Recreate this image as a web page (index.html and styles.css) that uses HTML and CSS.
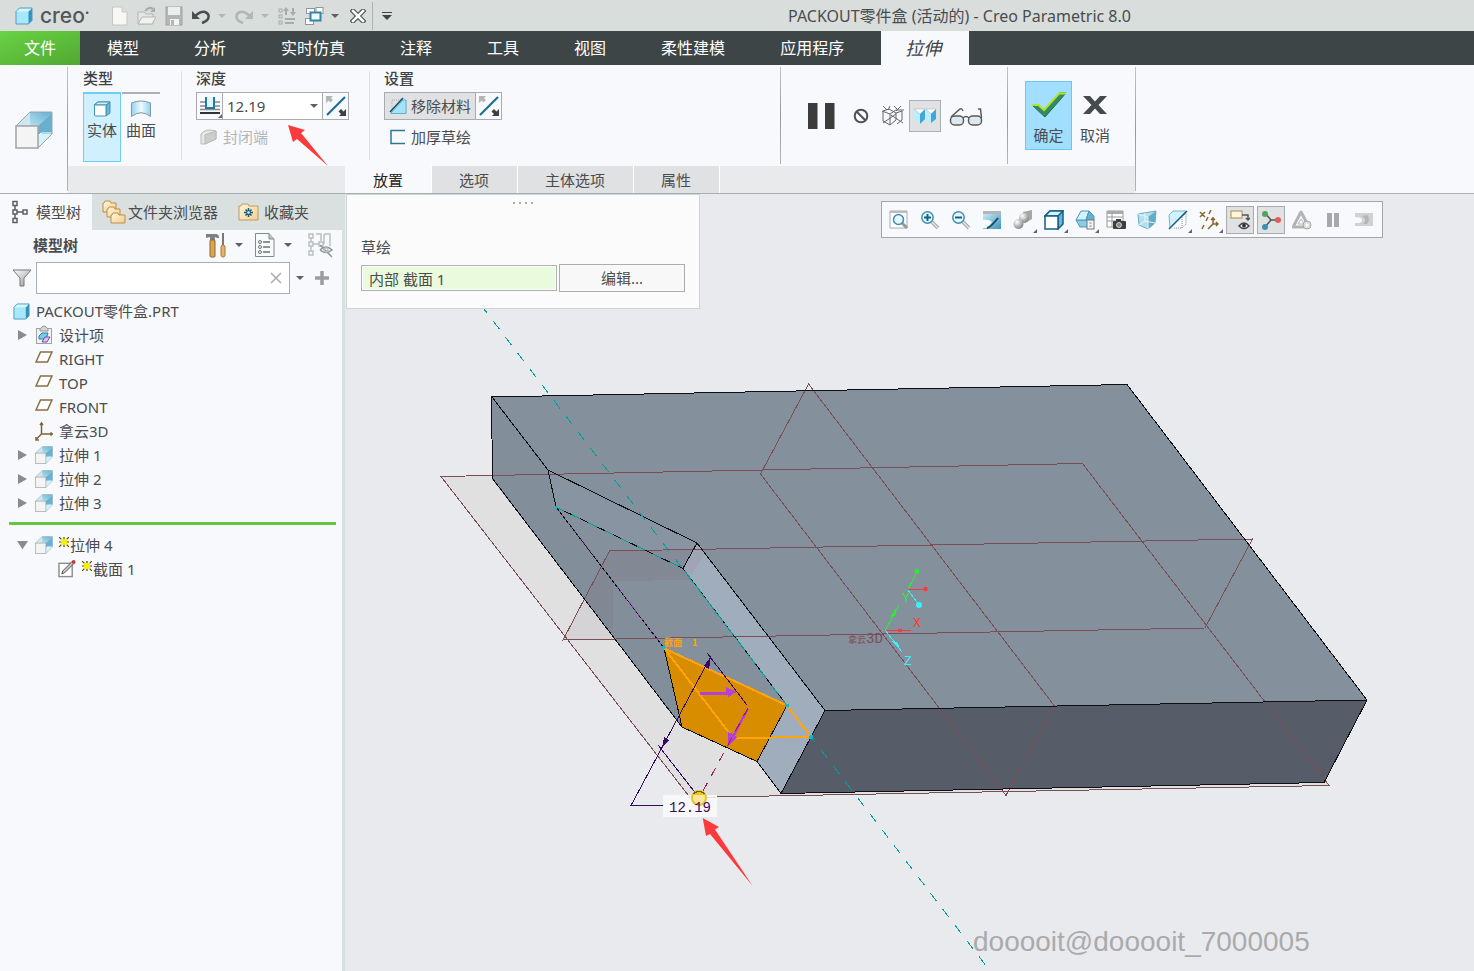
FILE: index.html
```html
<!DOCTYPE html>
<html lang="zh-CN">
<head>
<meta charset="utf-8">
<title>PACKOUT零件盒 (活动的) - Creo Parametric 8.0</title>
<link rel="stylesheet" href="styles.css">
</head>
<body>
<svg class="symbols" width="0" height="0" aria-hidden="true">
  <defs>
    <linearGradient id="g-pale" x1="0" y1="0" x2="1" y2="0"><stop offset="0" stop-color="#8fd3f0"/><stop offset=".5" stop-color="#effbff"/><stop offset="1" stop-color="#8fd3f0"/></linearGradient>
    <linearGradient id="g-grey" x1="0" y1="0" x2="1" y2="1"><stop offset="0" stop-color="#ffffff"/><stop offset="1" stop-color="#9a9a9a"/></linearGradient>
    <linearGradient id="g-folder" x1="0" y1="0" x2="1" y2="1"><stop offset="0" stop-color="#fff6df"/><stop offset="1" stop-color="#f3cf8c"/></linearGradient>
    <linearGradient id="g-top" x1="0" y1="1" x2="1" y2="0"><stop offset="0" stop-color="#b5e0f0"/><stop offset="1" stop-color="#63aecd"/></linearGradient>
    <linearGradient id="g-screen" x1="0" y1="0" x2="1" y2="1"><stop offset="0" stop-color="#c9ebf6"/><stop offset="1" stop-color="#3f93b8"/></linearGradient>
    <radialGradient id="g-ball" cx=".35" cy=".3" r=".8"><stop offset="0" stop-color="#fff"/><stop offset="1" stop-color="#777"/></radialGradient>
  </defs>
  <symbol id="i-extrude" viewBox="0 0 38 38">
    <path d="M1 15 15 1V15Z" fill="#cfe6ef"/>
    <path d="M15 1H37L23 15H15V1Z" fill="url(#g-top)"/>
    <path d="M23 15 37 1V23H23Z" fill="#69b0ce"/>
    <path d="M23 23H37L23 37Z" fill="#d5f3fd"/>
    <path d="M23 25 26 22H37" fill="none" stroke="#f4fcff"/>
    <path d="M1 15 15 1H37V23L23 37" fill="none" stroke="#8fa6b1"/>
    <rect x="1" y="15" width="22" height="22" fill="#f4f4f5" stroke="#a3a3a3" stroke-width="1.500"/>
  </symbol>
  <symbol id="i-cube" viewBox="0 0 18 18">
    <path d="M1 4.500 4.500 1H17V13.500L13.500 17H1Z" fill="#a8e8fb"/>
    <path d="M13.500 4.500 17 1V13.500L13.500 17Z" fill="#2e93bd"/>
    <path d="M1 4.500 4.500 1H17L13.500 4.500Z" fill="#d6f5fd"/>
    <path d="M1 4.500 4.500 1H17V13.500L13.500 17H1Z" fill="none" stroke="#4f9cbc"/>
  </symbol>
  <symbol id="i-plane" viewBox="0 0 18 12"><path d="M5.500 1H17L12.500 11H1Z" fill="#fff" stroke="#85703f" stroke-width="1.500"/></symbol>
  <symbol id="i-star" viewBox="0 0 10 10"><path d="M0 0 10 10M10 0 0 10M5 0V10M0 5H10" stroke="#4a4a1c" stroke-width="1.200"/><rect x="2" y="2" width="6" height="6" fill="#f6f000"/></symbol>
  <symbol id="i-flip" viewBox="0 0 20 20">
    <path d="M1 19 19 1" stroke="#1b6d92" stroke-width="2.200"/>
    <path d="M0 0H7L5 2 7 4 4.500 6.500 2.500 4.500 0 7Z" fill="#b5b5b5"/>
    <path d="M20 20H13L15 18 12.500 15.500 15 13 17.500 15.500 20 13Z" fill="#3f3f3f"/>
  </symbol>
  <symbol id="i-lens" viewBox="0 0 20 20">
    <path d="M12 12 18 18" stroke="#a4a4a4" stroke-width="3.500"/><path d="M12 12 18 18" stroke="#e4e4e4" stroke-width="1.500"/>
    <circle cx="7.500" cy="7.500" r="5.700" fill="#eaf8fd" stroke="#3d8db3" stroke-width="1.500"/>
  </symbol>
  <symbol id="i-tri" viewBox="0 0 10 10"><path d="M.5 0 9.500 5 .5 10Z" fill="#8b8b8b"/></symbol>
</svg>

<div class="app">
  <header class="titlebar">
    <div class="brand">
      <svg width="18" height="18"><use href="#i-cube"/></svg>
      <span class="brand-name">creo<sup>•</sup></span>
    </div>
    <div class="quick">
      <button aria-label="新建"><svg width="18" height="20" viewBox="0 0 18 20"><path d="M1.500 1H11L16 6V19H1.500Z" fill="#f7f7f5" stroke="#c4c6c5"/><path d="M11 1V6H16" fill="#e2e2e0" stroke="#c4c6c5"/></svg></button>
      <button aria-label="打开"><svg width="20" height="20" viewBox="0 0 20 20"><path d="M1 18V6H7L9 8H16V18Z" fill="#e6e6e4" stroke="#b5b7b6"/><path d="M1 18 5 11H19L15 18Z" fill="#f0f0ee" stroke="#b5b7b6"/><path d="M8 5Q12 0 16 3" fill="none" stroke="#a9abaa" stroke-width="2"/><path d="M13 6H18V1Z" fill="#a9abaa"/></svg></button>
      <button aria-label="保存"><svg width="18" height="20" viewBox="0 0 18 20"><rect x="1" y="1" width="16" height="18" fill="#b4b5b5" stroke="#a3a4a4"/><rect x="3" y="1" width="12" height="8" fill="#eee"/><rect x="5" y="13" width="9" height="6" fill="#f4f4f4"/><rect x="6" y="14" width="3" height="5" fill="#b4b5b5"/></svg></button>
      <button aria-label="撤消"><svg width="20" height="16" viewBox="0 0 20 16"><path d="M4 8Q10 3 14 4Q19 6 17 11Q15 14 11 15" fill="none" stroke="#4a4e50" stroke-width="2.500"/><path d="M1 3V11H9Z" fill="#4a4e50"/></svg></button>
      <button aria-label="撤消列表" class="caret faded"></button>
      <button aria-label="重做"><svg width="20" height="16" viewBox="0 0 20 16"><path d="M16 8Q10 3 6 4Q1 6 3 11Q5 14 9 15" fill="none" stroke="#b3b6b6" stroke-width="2.500"/><path d="M19 3V11H11Z" fill="#b3b6b6"/></svg></button>
      <button aria-label="重做列表" class="caret faded"></button>
      <button aria-label="重新生成"><svg width="20" height="20" viewBox="0 0 20 20" fill="none" stroke="#a9abab"><rect x="2" y="3" width="3" height="3"/><rect x="2" y="9" width="3" height="3"/><rect x="2" y="15" width="3" height="3"/><path d="M8 13H18M8 17H17" stroke-width="2"/><path d="M9 9V4M16 2V7" stroke-width="2"/><path d="M6 5 9 1 12 5ZM13 6 16 10 19 6Z" fill="#a9abab" stroke="none"/></svg></button>
      <button aria-label="窗口"><svg width="20" height="20" viewBox="0 0 20 20"><g fill="#fff" stroke="#929696"><rect x="2.500" y="2.500" width="8" height="5"/><rect x="12" y="1.500" width="7" height="6"/><rect x="1.500" y="12.500" width="8" height="6"/></g><rect x="6.500" y="6.500" width="10" height="8" fill="#f4fbfe" stroke="#2f85ad" stroke-width="2"/></svg></button>
      <button aria-label="窗口列表" class="caret"></button>
      <button aria-label="关闭" class="close"><svg width="16" height="14" viewBox="0 0 16 14"><path d="M3 2 13 12M13 2 3 12" stroke="#55595a" stroke-width="5" stroke-linecap="square"/><path d="M3 2 13 12M13 2 3 12" stroke="#fff" stroke-width="2.500" stroke-linecap="square"/></svg></button>
      <button aria-label="自定义快速访问工具栏" class="more"><svg width="12" height="10" viewBox="0 0 12 10"><path d="M1 1.500H11" stroke="#444" stroke-width="1"/><path d="M1 4H11L6 9Z" fill="#444"/></svg></button>
    </div>
    <h1 class="doc-title">PACKOUT零件盒 (活动的) - Creo Parametric 8.0</h1>
  </header>

  <nav class="menubar">
    <a href="#file" class="file">文件</a>
    <a href="#model">模型</a>
    <a href="#analysis">分析</a>
    <a href="#live">实时仿真</a>
    <a href="#annotate">注释</a>
    <a href="#tools">工具</a>
    <a href="#view">视图</a>
    <a href="#flex">柔性建模</a>
    <a href="#apps">应用程序</a>
    <a href="#extrude" class="active">拉伸</a>
  </nav>

  <section class="ribbon">
    <div class="feature"><svg width="38" height="38"><use href="#i-extrude"/></svg></div>
    <span class="rule"></span>
    <div class="dash">
      <div class="groups">
        <div class="group type">
          <h2>类型</h2>
          <div class="row">
            <button class="kind on"><svg width="18" height="18" viewBox="0 0 18 18"><path d="M1 5 5 2H17L13 5ZM13 5 17 2V13L13 16Z" fill="#5fb9dc" stroke="#4690b0"/><path d="M1 5 5 2H17L13 5Z" fill="#c9effb" stroke="#4690b0"/><rect x="1.500" y="5" width="11.500" height="11" rx="1" fill="#fff" stroke="#4690b0"/></svg>实体</button>
            <button class="kind"><svg width="22" height="18" viewBox="0 0 22 18"><path d="M1.500 3Q11-1 20.500 3V16.500Q11 9 1.500 16.500Z" fill="url(#g-pale)" stroke="#7e97a3"/></svg>曲面</button>
          </div>
        </div>
        <span class="rule light"></span>
        <div class="group depth">
          <h2><label for="depth">深度</label></h2>
          <div class="combo">
            <button aria-label="深度选项" class="side corner"><svg width="20" height="20" viewBox="0 0 20 20"><path d="M0 6H5M15 6H20M0 10H5M15 10H20M0 13.500H20" stroke="#8a8a8a" stroke-width="1.500"/><path d="M6 1V12H14V1" fill="#e2f7fd" stroke="#1f7ca6" stroke-width="2"/><path d="M0 17H20" stroke="#333" stroke-width="2"/></svg></button>
            <input id="depth" type="text" value="12.19">
            <button aria-label="深度值列表" class="caret"></button>
            <button aria-label="反向深度" class="side last"><svg width="20" height="20"><use href="#i-flip"/></svg></button>
          </div>
          <button class="line" disabled><svg width="18" height="18" viewBox="0 0 18 18"><path d="M1 6Q5 0 16 3V11L5 16H1Z" fill="#e6e6e6" stroke="#b9b9b9"/><path d="M5 7 16 3V11L5 16Z" fill="#cdcdcd" stroke="#b9b9b9"/></svg>封闭端</button>
        </div>
        <span class="rule light"></span>
        <div class="group settings">
          <h2>设置</h2>
          <div class="combo">
            <button class="remove"><svg width="18" height="18" viewBox="0 0 18 18"><path d="M3 3H17V16H3Z" fill="none" stroke="#aaa" stroke-dasharray="1 1"/><path d="M2 16 14 3H17V16.500H2Z" fill="#a2e4f8" stroke="#67b0cc"/><path d="M1 15 14 1" stroke="#174f6b" stroke-width="1.500"/></svg>移除材料</button>
            <button aria-label="反向材料侧" class="side last"><svg width="20" height="20"><use href="#i-flip"/></svg></button>
          </div>
          <button class="line"><svg width="18" height="18" viewBox="0 0 18 18"><path d="M17 2.500H3V15.500H17" fill="none" stroke="#2c7798" stroke-width="1.500"/></svg>加厚草绘</button>
        </div>
        <span class="rule"></span>
        <div class="group run">
          <button aria-label="暂停" class="wide"><svg width="28" height="28" viewBox="0 0 28 28"><path d="M1 1H10.500V27H1ZM18 1H27.500V27H18Z" fill="#3c3c3c"/></svg></button>
          <button aria-label="无预览"><svg width="16" height="16" viewBox="0 0 16 16"><circle cx="8" cy="8" r="6.300" fill="none" stroke="#505050" stroke-width="2"/><path d="M3.500 3.500 12.500 12.500" stroke="#505050" stroke-width="2"/></svg></button>
          <button aria-label="分离预览"><svg width="24" height="22" viewBox="0 0 24 22" fill="none" stroke="#666"><path d="M1 6 9 9 15 5H23M9 9V20L2 16V6M9 20 15 15V8L21 6V15L16 19M2 1 6 5M13 1 17 5M9 1 7 5M20 1 15 6M15 9 2 18M10 10 22 18M2 6 8 4 15 8"/></svg></button>
          <button aria-label="连接预览" class="on"><svg width="24" height="18" viewBox="0 0 24 18"><path d="M1 2H12V11L7 17 1 12Z" fill="#bdeeff"/><path d="M13 2H23V12L18 16 13 12Z" fill="#bdeeff"/><path d="M7 7 12 2V12L7 17ZM18 7 23 2V12L18 16Z" fill="#3aa9dd"/><path d="M1 2H12L7 7ZM13 2H23L18 7Z" fill="#fff" stroke="#9aa" stroke-width=".5"/></svg></button>
          <button aria-label="特征预览" class="spec"><svg width="34" height="22" viewBox="0 0 34 22" fill="none" stroke="#5b5b5b" stroke-width="1.500"><rect x="1.500" y="11" width="13" height="9" rx="4" fill="#dfe7ef"/><rect x="19.500" y="11" width="13" height="9" rx="4" fill="#dfe7ef"/><path d="M14 13Q17 10 20 13M2 12 11 4Q13 3 14 6M32.500 13 31.500 4H29"/></svg></button>
        </div>
        <span class="rule"></span>
        <div class="group finish">
          <button class="ok"><svg width="36" height="26" viewBox="0 0 36 26"><path d="M1 13H8L13 18 28 1H35L14 25Z" fill="#348c5e" stroke="#1f6b46"/><path d="M1 13H7.500L13 18 28 1.500H35" fill="none" stroke="#b5e32c" stroke-width="2"/></svg>确定</button>
          <button><svg width="26" height="26" viewBox="0 0 26 26"><path d="M1 4H8L13 9.500 18 4H25L16.500 13 25 22H18L13 16.500 8 22H1L9.500 13Z" fill="#464a4b"/></svg>取消</button>
        </div>
      </div>
      <div class="subtabs" role="tablist">
        <button role="tab" aria-selected="true">放置</button>
        <button role="tab">选项</button>
        <button role="tab">主体选项</button>
        <button role="tab">属性</button>
      </div>
    </div>
    <span class="rule"></span>
    <svg class="callout" width="42" height="42" viewBox="287 124 42 42"><path d="M288 125 305 130 301 133 328 166 297 139 293 142Z" fill="#fb3b3b"/></svg>
  </section>

  <main class="workspace">
    <aside class="sidebar">
      <div class="side-tabs" role="tablist">
        <button role="tab" aria-selected="true"><svg width="18" height="24" viewBox="0 0 18 24" fill="none" stroke="#5c5f60" stroke-width="1.500"><rect x="2" y="1.500" width="4" height="4"/><rect x="2" y="10" width="4" height="4"/><rect x="2" y="18.500" width="4" height="4"/><rect x="12" y="10" width="4" height="4"/><path d="M4 6V10M4 14V18M6 12H12"/></svg>模型树</button>
        <button role="tab"><svg width="24" height="24" viewBox="0 0 24 24" fill="url(#g-folder)" stroke="#bd8e45"><path d="M1 3H2L3 1H8L9 3H14V12H1Z"/><path d="M5 9H6L7 7H12L13 9H18V17H5Z"/><path d="M9 15H10L11 13H16L17 15H23V23H9Z"/></svg>文件夹浏览器</button>
        <button role="tab"><svg width="22" height="20" viewBox="0 0 22 20"><path d="M1 4H3L4 2H10L11 4H20V18H1Z" fill="url(#g-folder)" stroke="#bd9a5c"/><path d="M10.500 6V15M6 10.500H15M7.500 7.500 13.500 13.500M13.500 7.500 7.500 13.500" stroke="#175a7c" stroke-width="1.500"/><circle cx="10.500" cy="10.500" r="1.300" fill="#dff"/></svg>收藏夹</button>
      </div>
      <div class="side-head">
        <h2>模型树</h2>
        <button aria-label="树设置"><svg width="22" height="26" viewBox="0 0 22 26"><path d="M1 2H11Q14 2 14 6H12L10 5V8H5V5L1 6Z" fill="#7d8184"/><rect x="5" y="8" width="5" height="17" rx="1" fill="#dca551" stroke="#936626"/><path d="M18 1V13" stroke="#77797b" stroke-width="2"/><rect x="16" y="13" width="4" height="12" rx="2" fill="#e6b464" stroke="#a87931"/></svg></button>
        <button aria-label="树设置列表" class="caret"></button>
        <button aria-label="显示" class="show"><svg width="22" height="26" viewBox="0 0 22 26"><path d="M1.500 1.500H15L20 7V24.500H1.500Z" fill="#f8fbfc" stroke="#81898d"/><path d="M15 1.500V7H20" fill="#bcc6ca" stroke="#81898d"/><g fill="none" stroke="#6a7073"><circle cx="6" cy="10" r="1.500"/><circle cx="6" cy="15" r="1.500"/><circle cx="6" cy="20" r="1.500"/><path d="M9 10H16M9 15H16M9 20H16" stroke-width="1.500"/></g></svg></button>
        <button aria-label="显示列表" class="caret"></button>
        <button aria-label="隐藏树列" class="hide"><svg width="26" height="26" viewBox="0 0 26 26" fill="none" stroke="#bcc0c0" stroke-width="1.500"><path d="M2 2H6V6H2ZM2 10H6V14H2ZM2 19H6V23H2ZM12 10H16V14H12ZM4 6V10M4 14V19M6 12H12M9 2H14V9M17 2H23V14M17 2V12"/><path d="M13 18Q19 12 25 18Q19 23 13 18M13 13 25 25" stroke="#8f9393"/><circle cx="19" cy="18" r="2"/></svg></button>
      </div>
      <div class="filter">
        <svg width="20" height="20" viewBox="0 0 20 20"><path d="M1 2H19L12 10V18H8V10Z" fill="url(#g-grey)" stroke="#70767a"/></svg>
        <div class="search"><input type="text" aria-label="过滤树"><button aria-label="清除"><svg width="12" height="12" viewBox="0 0 12 12"><path d="M1 1 11 11M11 1 1 11" stroke="#aaadad" stroke-width="1.500"/></svg></button></div>
        <button aria-label="过滤列表" class="caret"></button>
        <button aria-label="添加"><svg width="16" height="16" viewBox="0 0 16 16"><path d="M8 1V15M1 8H15" stroke="#9a9d9d" stroke-width="3.500"/></svg></button>
      </div>
      <ul class="tree">
        <li class="root"><svg width="17" height="17"><use href="#i-cube"/></svg>PACKOUT零件盒.PRT</li>
        <li><svg class="tw" width="10" height="10"><use href="#i-tri"/></svg><svg width="18" height="20" viewBox="0 0 18 20"><rect x="1.500" y="3.500" width="15" height="15" fill="#f2f2f2" stroke="#a2a2a2"/><path d="M5 4Q9-2 13 4V6H5Z" fill="#d4d4d4" stroke="#999"/><path d="M4 11 7 8H13L11 14H4Z" fill="#6ed0ec" stroke="#357f9c"/><path d="M7 17 10 12H15L12 17Z" fill="#d8c2f3" stroke="#7950a8"/></svg>设计项</li>
        <li><i class="tw"></i><svg class="raised" width="18" height="12"><use href="#i-plane"/></svg>RIGHT</li>
        <li><i class="tw"></i><svg class="raised" width="18" height="12"><use href="#i-plane"/></svg>TOP</li>
        <li><i class="tw"></i><svg class="raised" width="18" height="12"><use href="#i-plane"/></svg>FRONT</li>
        <li><i class="tw"></i><svg width="18" height="20" viewBox="0 0 18 20" fill="none" stroke="#7d6535" stroke-width="1.500"><path d="M6.500 2V13H17M6.500 13 1 18.500M5 4 6.500 2 8 4M15.500 11.500 17.500 13 15.500 14.500M1 16V19H4"/></svg>拿云3D</li>
        <li><svg class="tw" width="10" height="10"><use href="#i-tri"/></svg><svg width="18" height="18"><use href="#i-extrude"/></svg>拉伸 1</li>
        <li><svg class="tw" width="10" height="10"><use href="#i-tri"/></svg><svg width="18" height="18"><use href="#i-extrude"/></svg>拉伸 2</li>
        <li><svg class="tw" width="10" height="10"><use href="#i-tri"/></svg><svg width="18" height="18"><use href="#i-extrude"/></svg>拉伸 3</li>
      </ul>
      <hr class="insert">
      <ul class="tree">
        <li><svg class="tw" width="12" height="10" viewBox="0 0 12 10"><path d="M0 .5H12L6 9.500Z" fill="#8b8b8b"/></svg><svg width="18" height="18"><use href="#i-extrude"/></svg><svg class="mark" width="10" height="10"><use href="#i-star"/></svg>拉伸 4</li>
        <li class="child"><svg width="18" height="20" viewBox="0 0 19 20"><rect x="1" y="4" width="14" height="14" fill="#fff" stroke="#8c8c8c" stroke-width="1.500"/><path d="M4 15 5 12 15 2 17 4 7 14Z" fill="#c6c6c6" stroke="#4d4d4d"/><circle cx="16.500" cy="2.500" r="2" fill="#c23a3a"/></svg><svg class="mark" width="10" height="10"><use href="#i-star"/></svg>截面 1</li>
      </ul>
    </aside>

    <section class="viewport">
      <svg class="scene" viewBox="345 194 1129 777" preserveAspectRatio="xMinYMin meet" shape-rendering="crispEdges">
        <path d="M441 476.500 1082 463 1329 785 690 797.500Z" fill="#e1e0e1"/>
        <path d="M609.500 551 563 640 640 638 Z" fill="#d6d3d6"/>
        <path d="M492 397 1127 384.500 1367 700 825 711 697 543 548 470Z" fill="#84909b"/>
        <path d="M492 397 548 470 556 507 664 648 682 727 492 479Z" fill="#828e99"/>
        <path d="M548 470 697 543 683 568.500 556 507Z" fill="#8894a2"/>
        <path d="M556 507 683 568.500 787 705.500 664 648Z" fill="#84909b"/>
        <path d="M610 551 697 549 687 568 690 580 613 581V634L585 599Z" fill="#82808c" opacity=".45"/>
        <path d="M697 543 825 711 781 793.500 757 761.500 787 705.500 683 568.500Z" fill="#a0adbd"/>
        <path d="M697 543 705 553 690 578 683 568.500Z" fill="#a0a5b5"/>
        <path d="M825 711 1367 700 1324 782.500 781 793.500Z" fill="#575d68"/>
        <path d="M664 648 787 705.500 757 761.500 682 727Z" fill="#d88c00"/>
        <g fill="none" stroke="#7a4e56">
          <path d="M441 476.500 1082.500 463.500 1329 785.500 690 797.500Z"/>
          <path d="M609.500 551 1252.500 539 1205 628 563 640Z"/>
          <path d="M808.500 384 1054.500 706 1006 795.500 760.500 474Z"/>
        </g>
        <g fill="none" stroke="#0c1014">
          <path d="M491.500 397 1127 384.500 1367 700 1324 782.500 781 793.500 757 761.500 682 727 492.500 478.500Z"/>
          <path d="M492 397 548 470 697 543 825 710.500 1367 700M825 710.500 781 793.500M548 470 556 507 683 568.500 697 543M556 507 664 648 682 727M683 568.500 787 705.500 757 761.500"/>
        </g>
        <path d="M556 507 664 648" fill="none" stroke="#8e35a8" stroke-dasharray="2 3"/>
        <path d="M484 309 988.500 969" fill="none" stroke="#00a09a" stroke-dasharray="10 10" stroke-dashoffset="5"/>
        <path d="M556 507 683 568.500 787 705.500" fill="none" stroke="#00a09a" stroke-dasharray="9 9"/>
        <path d="M787 705.500 811 737 733 738 664.500 648.500 787 705.500" fill="none" stroke="#ffa40a" stroke-width="2"/>
        <g fill="#12b5da"><circle cx="556" cy="507.500" r="1.500"/><circle cx="663.500" cy="647.500" r="2"/><circle cx="787" cy="705.500" r="2"/><circle cx="811" cy="737" r="2"/></g>
        <g fill="none" stroke="#360a60"><path d="M711 656 631 805.500H664M707 653 747 705M658 745 697 795"/></g>
        <path d="M711 656 709 669 704 666ZM662 748 664 737 669 740Z" fill="#360a60"/>
        <g fill="#b53fd8"><path d="M700 691.500H726V687L737 692 728 697V694.500H700Z"/><path d="M747 708 733 734 728 732V746L737 738 735 735.500 749 709Z"/></g>
        <path d="M748 708 703 791" fill="none" stroke="#a51b58" stroke-dasharray="9 8"/>
        <rect x="663" y="795" width="54" height="22" fill="#fafafc" opacity=".85"/>
        <circle cx="699" cy="798" r="7" fill="#fbe79c" stroke="#e6c22e" stroke-width="2" shape-rendering="auto"/>
        <path d="M692 795Q699 786 706 795Z" fill="#efc516"/><path d="M693 794Q699 789 705 794" fill="none" stroke="#6f5b14"/>
        <text x="669" y="812" class="dim">12.19</text>
        <text x="664" y="646" class="sketch-label">截面</text><text x="692" y="646" class="sketch-label">1</text>
        <g fill="none"><path d="M885.500 630 899 605M908 589.500 917 572" stroke="#2dea35"/><path d="M885 630.500H911M908 589.500H925" stroke="#ff3737"/><path d="M885.500 630.500 902 652M908 590 919 605" stroke="#35f2fb"/></g>
        <path d="M896 608 896 615 890 618Z" fill="#2dea35"/><path d="M898 628.500 905 630.500 898 632.500Z" fill="#ff3737"/><path d="M892 641 898 643 900 650Z" fill="#35f2fb"/>
        <g shape-rendering="auto"><circle cx="917" cy="571.500" r="2.500" fill="#2dea35"/><circle cx="925.500" cy="589" r="2.200" fill="#ff3737"/><circle cx="919" cy="605" r="3" fill="#35f2fb"/></g>
        <text x="902" y="602" class="axis y">Y</text><text x="913" y="627" class="axis x">X</text><text x="904" y="665" class="axis z">Z</text>
        <text x="848" y="643" class="csys">拿云<tspan class="csys-d">3D</tspan></text>
        <path d="M702.700 818 719 827 715 829.500 752.700 886 710 834 706 836Z" fill="#fb3b3b" shape-rendering="auto"/>
        <text x="973" y="951" class="mark-text">dooooit@dooooit_7000005</text>
      </svg>

      <div class="slide">
        <span class="grip"><i></i><i></i><i></i><i></i></span>
        <label for="sketch">草绘</label>
        <div class="pick"><input id="sketch" type="text" value="内部 截面 1" readonly><button>编辑...</button></div>
      </div>

      <div class="view-tools">
        <button aria-label="重新调整"><svg width="20" height="20" viewBox="0 0 20 20"><path d="M1 1H18V18H1Z" fill="#fff" stroke="#a8aaab"/><path d="M1 2H18" stroke="#b9bbbc" stroke-width="2"/><path d="M13 13 18 18" stroke="#9a9a9a" stroke-width="3"/><circle cx="9.500" cy="9.500" r="5" fill="#e5f6fd" stroke="#3d8db3" stroke-width="1.500"/></svg></button>
        <button aria-label="放大"><svg width="20" height="20" viewBox="0 0 20 20"><use href="#i-lens" width="20" height="20"/><path d="M4 7.500H11M7.500 4V11" stroke="#155f86" stroke-width="2"/></svg></button>
        <button aria-label="缩小"><svg width="20" height="20" viewBox="0 0 20 20"><use href="#i-lens" width="20" height="20"/><path d="M4 7.500H11" stroke="#155f86" stroke-width="2"/></svg></button>
        <button aria-label="重画"><svg width="20" height="20" viewBox="0 0 20 20"><rect x="1" y="1" width="18" height="18" fill="#b3b7b9"/><rect x="1" y="4" width="18" height="15" fill="url(#g-screen)"/><path d="M1 18V10Q7 9 10 12L6 18Z" fill="#fafdfe"/><path d="M5 18Q9 17 16 8" fill="none" stroke="#164d69" stroke-width="2"/></svg></button>
        <button aria-label="渲染选项" class="corner"><svg width="20" height="20" viewBox="0 0 20 20"><path d="M10 2 19 0V9L12 13Z" fill="#a6a6a6"/><circle cx="11" cy="8" r="5" fill="url(#g-ball)"/><circle cx="5.500" cy="14" r="5" fill="url(#g-ball)"/></svg></button>
        <button aria-label="显示样式" class="corner"><svg width="20" height="20" viewBox="0 0 20 20" stroke="#155f86" stroke-width="1.500"><path d="M1 6 6 1H19V14L14 19V6Z" fill="#65b7d5"/><path d="M1 6 6 1H19L14 6Z" fill="#d5f2fb"/><rect x="1" y="6" width="13" height="13" fill="#fff"/></svg></button>
        <button aria-label="已保存方向" class="corner"><svg width="20" height="20" viewBox="0 0 20 20"><path d="M1 10H18L15 17H5Z" fill="#8ccde4" stroke="#4898b8"/><path d="M6 1H14L11 10H1Z" fill="#d3f2fb" stroke="#4898b8"/><path d="M14 1 19 6V10H11Z" fill="#62b4d1" stroke="#4898b8"/><rect x="12" y="10" width="7" height="9" fill="#f5f5f5" stroke="#777"/><path d="M14.500 13H16.500M14.500 16H16.500" stroke="#777"/></svg></button>
        <button aria-label="视图管理器"><svg width="20" height="20" viewBox="0 0 20 20"><path d="M1 1H17V17H1Z" fill="#fff" stroke="#999"/><path d="M1 2.500H17" stroke="#aaa" stroke-width="3"/><path d="M1 7H17M1 11H17M6 3V17" stroke="#999"/><rect x="7" y="11" width="13" height="8" rx="1" fill="#3c3e3f"/><rect x="10" y="9" width="5" height="3" fill="#3c3e3f"/><circle cx="13" cy="15" r="2.500" fill="#888" stroke="#fff" stroke-width=".7"/></svg></button>
        <button aria-label="透视图"><svg width="20" height="20" viewBox="0 0 20 20"><path d="M1 4 19 1 18 13 11 19 2 15Z" fill="#b8dfec" stroke="#6aacc4"/><path d="M11 7 19 1 18 13 11 19Z" fill="#64adca"/><path d="M1 4 11 7V19M2 15 8 11V3M8 11 18 13" fill="none" stroke="#e6f7fd"/></svg></button>
        <button aria-label="截面" class="corner"><svg width="20" height="20" viewBox="0 0 20 20"><path d="M1 5 5 1H18L2 18Z" fill="#d1f1fb" stroke="#6db8d3"/><path d="M6 18H14V7L18 3V14L14 18" fill="none" stroke="#888" stroke-dasharray="1 1"/><path d="M1 19 19 1" stroke="#155f86" stroke-width="1.500"/></svg></button>
        <button aria-label="基准显示" class="corner"><svg width="20" height="20" viewBox="0 0 20 20" fill="none" stroke="#84682d" stroke-width="1.500"><path d="M1 2 6 7M6 2 1 7M12 0 10 4M9 7 7 11M5 15 3 19M14 7V14H19M14 14 9 19M12 10 14 8 16 10M17 12 19 14 17 16"/></svg></button>
        <button aria-label="注释显示" class="on"><svg width="20" height="22" viewBox="0 0 20 22"><rect x="1" y="2" width="11" height="7" fill="#fff6db" stroke="#a78b53"/><path d="M12 6H18V11M16 9 18 11 20 9" fill="none" stroke="#555" stroke-width="1.500"/><path d="M9 17Q14 11 19 17Q14 22 9 17Z" fill="#fff" stroke="#444" stroke-width="1.500"/><circle cx="14" cy="16.500" r="2" fill="#333"/></svg></button>
        <button aria-label="旋转中心" class="on"><svg width="20" height="20" viewBox="0 0 20 20"><path d="M4 3 10 10H17M10 10 4 17" fill="none" stroke="#555" stroke-width="1.500"/><circle cx="4" cy="4" r="3" fill="#4fa35c"/><circle cx="17" cy="10" r="3" fill="#df5d5d"/><circle cx="4" cy="17" r="3" fill="#3c8fb5"/></svg></button>
        <button aria-label="仿真"><svg width="20" height="20" viewBox="0 0 20 20"><path d="M9 2 17 17H1Z" fill="none" stroke="#b1b3b4" stroke-width="3" stroke-linejoin="round"/><path d="M9 9 12 14H6Z" fill="#fff" stroke="#b1b3b4"/><circle cx="15" cy="15" r="4" fill="#ddd" stroke="#aaa"/><path d="M14 13 17 15 14 17Z" fill="#fff"/></svg></button>
        <button aria-label="暂停仿真"><svg width="14" height="14" viewBox="0 0 14 14"><path d="M1 0H6V14H1ZM8 0H13V14H8Z" fill="#a6a8a9"/></svg></button>
        <button aria-label="结果"><svg width="20" height="16" viewBox="0 0 20 16"><path d="M1 1H19V14H1V11H5Q9 10 8 7Q7 5 1 5Z" fill="#cfd1d2"/><path d="M8 4Q14 7 9 12H13Q17 7 13 3Z" fill="#b4b6b7"/></svg></button>
      </div>
    </section>
  </main>
</div>
</body>
</html>
```

FILE: styles.css
```css
* { box-sizing: border-box; }
body {
  margin: 0;
  font: 15px/20px "Noto Sans", "Noto Sans CJK SC", sans-serif;
  color: #4a4c4e;
  background: #e9eaee;
}
button {
  margin: 0; padding: 0; border: 0; background: none;
  font: inherit; color: inherit;
  display: flex; align-items: center; justify-content: center;
}
svg { display: block; flex: none; }
input { font: inherit; color: inherit; min-width: 0; outline: 0; }
h1, h2 { margin: 0; font-size: 15px; }
.symbols { position: absolute; }
.app { min-height: 100vh; display: flex; flex-direction: column; }

.caret { width: 16px; height: 20px; }
.caret::before {
  content: ""; border: 4px solid transparent; border-bottom: 0; border-top-color: #5d6163;
}
.faded::before { border-top-color: #b3b7b7; }
.corner { position: relative; }
.corner::after {
  content: ""; position: absolute; right: 0; bottom: 1px;
  border: 2px solid #666; border-top-color: transparent; border-left-color: transparent;
}

/* Title bar */
.titlebar { display: flex; align-items: center; height: 31px; background: #d9dedd; }
.brand { display: flex; align-items: center; gap: 7px; width: 96px; padding-left: 15px; }
.brand-name { font: 500 21px/24px Inter, sans-serif; color: #53585a; display: flex; }
.brand-name sup { font-size: 8px; line-height: 16px; }
.quick { display: flex; align-items: center; padding-left: 10px; }
.quick button { width: 27px; height: 28px; }
.quick .caret { width: 16px; }
.quick .close { width: 29px; }
.quick .more { border-left: 1px solid #aeb4b4; width: 28px; }
.doc-title {
  flex: 1; padding-left: 45px; text-align: center;
  font-size: 16px; font-weight: 400; white-space: nowrap;
}

/* Menu tabs */
.menubar { display: flex; height: 34px; background: #3d4547; font-size: 16px; }
.menubar a {
  display: flex; align-items: center; padding: 0 28px 0 27px;
  color: #fff; text-decoration: none; white-space: nowrap;
}
.menubar .file {
  padding: 0 24px;
  background: linear-gradient(160deg, #68d344, #52a732);
}
.menubar .active {
  margin-left: 9px; padding: 0 28px 0 24px; background: #f8f9fc;
  color: #3f4345; font-size: 18px; font-style: italic;
}

/* Ribbon */
.ribbon {
  position: relative; display: flex; height: 129px;
  background: #f8f9fc; border-bottom: 1px solid #a9aeb1;
}
.feature { width: 67px; padding: 46px 0 0 15px; }
.rule { width: 1px; margin: 2px 0; background: linear-gradient(#c2c5c8, #96999b, #b3b6b9); }
.rule.light { margin: 6px 0; background: #dcdee1; }
.dash { display: flex; flex-direction: column; }
.groups { display: flex; height: 101px; }
.group { padding: 3px 20px 0 14px; }
.group h2 { margin-bottom: 4px; color: #3f4244; font-weight: 500; }
.type { padding: 3px 21px 0 15px; }
.settings { width: 410px; }
.row { display: flex; gap: 1px; }
.kind {
  flex-direction: column; justify-content: flex-start; gap: 2px;
  width: 38px; height: 70px; padding-top: 6px; border-top: 2px solid #adafb1;
}
.kind.on { background: #d0f0fd; border: 1px solid #6fccf4; border-top-width: 2px; }
.combo { display: flex; width: max-content; height: 28px; border: 1px solid #a9acae; }
.combo input { width: 83px; padding: 0 4px; border: 0; background: #fff; }
.combo .caret { height: 26px; background: #fff; }
.side { width: 26px; border-right: 1px solid #a9acae; }
.side.last { border-right: 0; border-left: 1px solid #a9acae; }
.remove { width: 90px; gap: 4px; background: #e0e1e3; }
.line { height: 20px; margin-top: 7px; padding-left: 4px; gap: 5px; }
.line:disabled { color: #b4b6b8; }
.run { display: flex; align-items: center; padding: 0 16px; }
.run button { width: 32px; height: 32px; }
.run .wide { width: 48px; }
.run .spec { width: 50px; }
.run .on { background: #e0e1e3; border: 1px solid #acafb1; }
.finish { display: flex; align-items: center; padding: 0 17px; }
.finish button { flex-direction: column; gap: 7px; width: 46px; height: 69px; padding-top: 5px; }
.finish .ok { width: 47px; background: #a2dfff; border: 1px solid #6cc6f1; }
.subtabs { display: flex; flex: 1; padding-left: 277px; background: #e9eaeb; }
.subtabs button { padding: 0 28px 0 27px; background: #e0e1e3; border-right: 1px solid #fff; }
.subtabs button[aria-selected] { padding: 0 28px; background: #f8f9fc; color: #222; }
.callout { position: absolute; left: 287px; top: 59px; }

/* Model tree */
.workspace { flex: 1; display: flex; }
.sidebar { width: 345px; flex: none; background: #f8f9fc; border-right: 3px solid #dae0df; }
.side-tabs { display: flex; height: 36px; background: #dae0df; }
.side-tabs button { gap: 4px; padding: 0 10px; }
.side-tabs button:nth-child(1) { padding: 0 11px; gap: 7px; background: #f8f9fc; }
.side-tabs button:nth-child(2) { gap: 2px; }
.side-head { display: flex; align-items: center; height: 32px; padding: 0 9px 2px 33px; gap: 4px; }
.side-head h2 { flex: 1; font-weight: 700; }
.side-head .show { margin-left: 3px; }
.side-head .hide { margin-left: 7px; }
.filter { display: flex; align-items: center; height: 32px; padding: 0 7px 0 12px; gap: 4px; }
.search { flex: 1; display: flex; height: 32px; background: #fff; border: 1px solid #a3b2b2; }
.search input { flex: 1; border: 0; background: none; }
.search button { width: 22px; }
.filter .caret { width: 12px; }
.filter button:last-child { width: 26px; }
.tree { list-style: none; margin: 0; padding: 5px 0 0; }
.tree li { display: flex; align-items: center; height: 24px; padding-left: 17px; gap: 6px; white-space: nowrap; }
.tree .root { padding-left: 13px; }
.tree .tw { width: 11px; margin-right: 1px; }
.tree .raised { margin-bottom: 4px; }
.tree .mark { margin: 0 -5px 6px 0; }
.tree .child { padding-left: 58px; }
.insert { height: 3px; margin: 7px 6px 0 9px; border: 0; background: #62c63f; }
.insert + .tree { padding-top: 8px; }

/* Graphics area */
.viewport { position: relative; flex: 1; min-width: 0; background: #e9eaee; }
.scene { width: 100%; height: auto; }
.dim { font: 14px "Liberation Mono", monospace; fill: #360a60; }
.sketch-label { font: 700 9px "Noto Sans CJK SC", sans-serif; fill: #ffa40a; }
.axis { font: 13px "Liberation Mono", monospace; }
.axis.x { fill: #ff3737; }
.axis.y { fill: #2dea35; }
.axis.z { fill: #35f2fb; }
.csys { font: 9px "Noto Sans CJK SC", sans-serif; fill: #7a4e56; }
.csys-d { font: 14px "Liberation Mono", monospace; }
.mark-text { font: 28px "Liberation Sans", Arial, sans-serif; fill: #a9aaac; }

.slide {
  position: absolute; left: 1px; top: 0; width: 354px; padding: 7px 14px 16px;
  display: flex; flex-direction: column;
  background: #fbfbfb; border: 1px solid #cfd4d4;
}
.grip { display: flex; justify-content: center; gap: 4px; margin-bottom: 33px; }
.grip i { width: 2px; height: 2px; background: #a9acae; }
.pick { display: flex; align-items: center; gap: 2px; margin-top: 7px; }
.pick input {
  width: 196px; height: 26px; padding: 0 7px; border: 1px solid #abb0b3;
  background: #e9fbdc; box-shadow: inset 0 0 0 1px #fff;
}
.pick button { flex: 1; height: 28px; background: #f8f8f8; border: 1px solid #abadaf; }

.view-tools {
  position: absolute; right: 91px; top: 7px; display: flex; gap: 3px;
  padding: 4px 4px 3px 3px; background: #f8f9fc; border: 1px solid #a3a6a8;
}
.view-tools button { width: 28px; height: 28px; }
.view-tools .on { background: #e0e1e3; border: 1px solid #a9acae; }
```
